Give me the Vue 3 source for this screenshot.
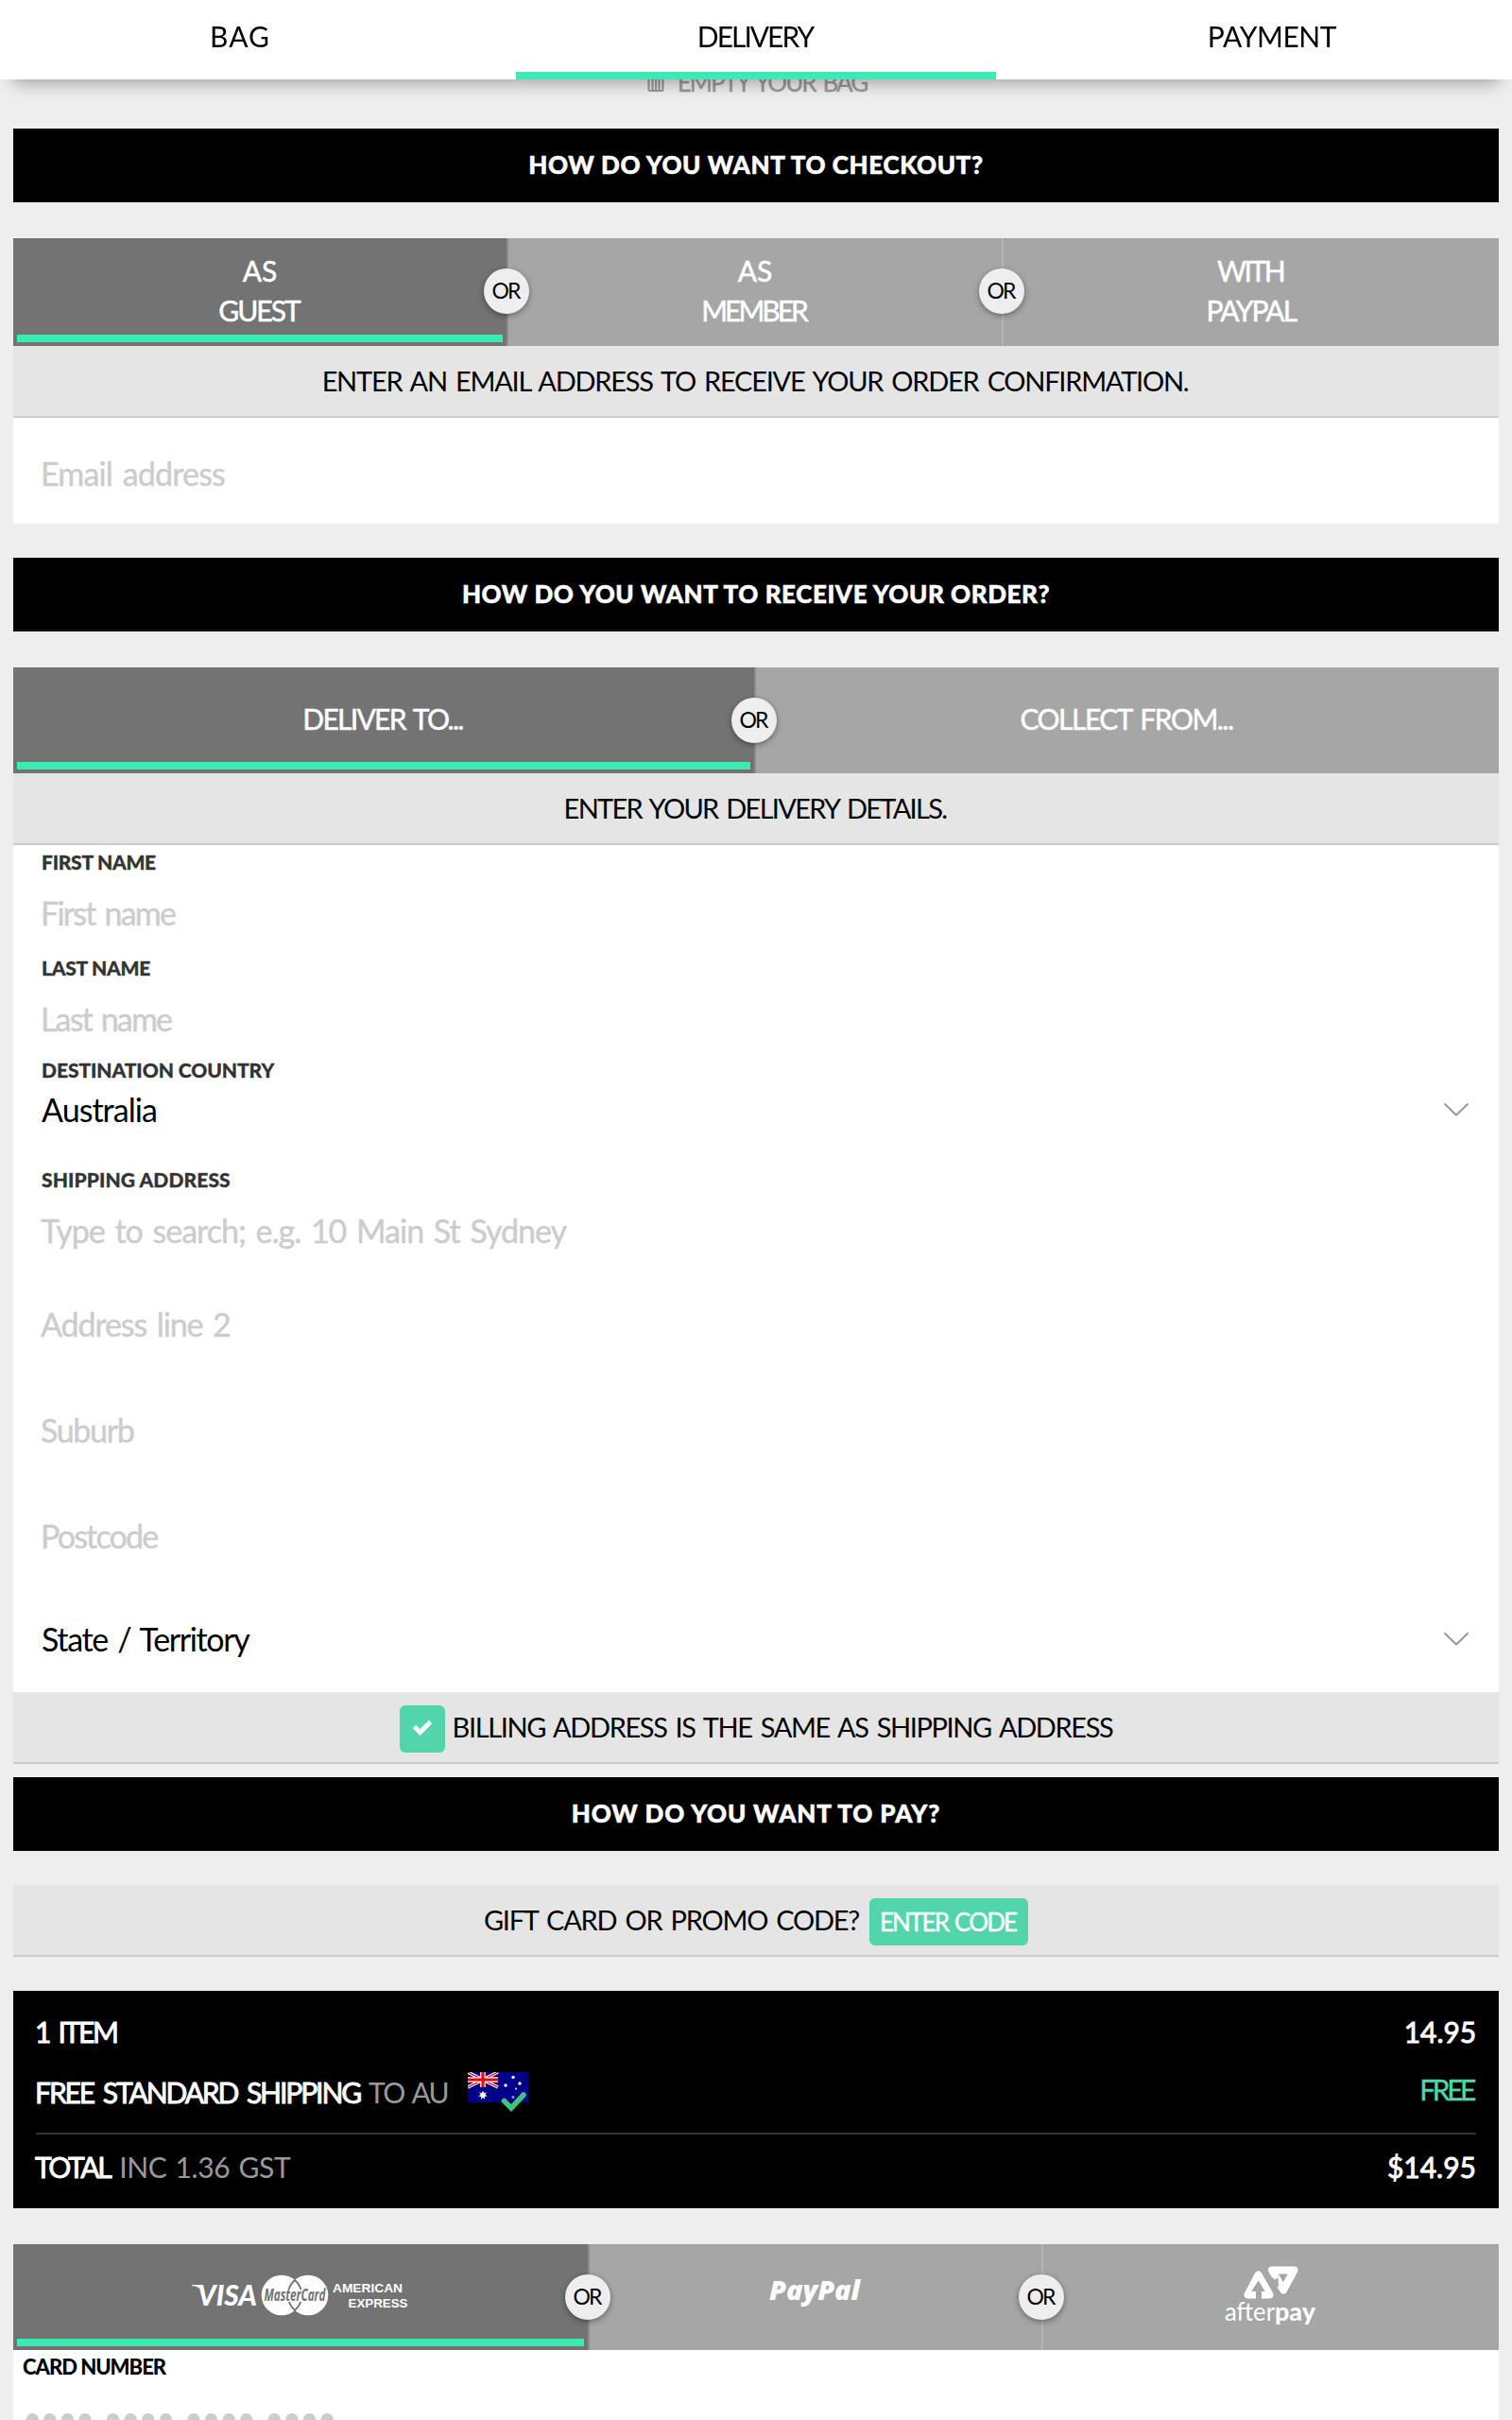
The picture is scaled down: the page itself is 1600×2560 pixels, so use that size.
<script setup>
const steps = [
  { label: 'BAG', cls: 'w-bag' },
  { label: 'DELIVERY', cls: 'w-delivery', active: true },
  { label: 'PAYMENT', cls: 'w-payment' },
]
const checkoutTabs = [
  { lines: [['AS', ''], ['GUEST', 'w-guest']], active: true },
  { lines: [['AS', ''], ['MEMBER', 'w-member']] },
  { lines: [['WITH', 'w-with'], ['PAYPAL', 'w-paypal']] },
]
const deliveryTabs = [
  { label: 'DELIVER TO...', cls: 'w-deliver', active: true },
  { label: 'COLLECT FROM...', cls: 'w-collect' },
]
const fields = [
  { label: 'FIRST NAME', lcls: 'w-lfirst', text: 'First name', cls: 'w-first' },
  { label: 'LAST NAME', lcls: 'w-llast', text: 'Last name', cls: 'w-last' },
  { label: 'DESTINATION COUNTRY', lcls: 'w-ldest', text: 'Australia', cls: 'w-aus', select: true },
  { label: 'SHIPPING ADDRESS', lcls: 'w-lship', text: 'Type to search; e.g. 10 Main St Sydney', cls: 'w-type' },
  { text: 'Address line 2', cls: 'w-line2' },
  { text: 'Suburb', cls: 'w-suburb' },
  { text: 'Postcode', cls: 'w-postcode' },
  { text: 'State / Territory', cls: 'w-state', select: true },
]
</script>

<template>
  <div class="page">
    <header class="steps">
      <div v-for="s in steps" :key="s.label" class="step" :class="{ active: s.active }">
        <span :class="s.cls">{{ s.label }}</span>
      </div>
    </header>

    <main class="content">
      <div class="empty-bag">
        <svg class="trash" width="18" height="26" viewBox="0 0 18 26">
          <path d="M0 5h18M6 4V1.500h6V4" fill="none" stroke="#999" stroke-width="2" />
          <path d="M1.500 7v16.500q0 1.500 1.500 1.500h12q1.500 0 1.500-1.500V7M5.500 8v16M9 8v16M12.500 8v16" fill="none" stroke="#999" stroke-width="2.200" />
        </svg>
        <span>EMPTY YOUR BAG</span>
      </div>

      <h2 class="heading"><span class="w-h1">HOW DO YOU WANT TO CHECKOUT?</span></h2>

      <div class="tabs three tall">
        <div v-for="(t, i) in checkoutTabs" :key="i" class="tab" :class="{ active: t.active }">
          <div v-for="l in t.lines" :key="l[0]" class="tab-line"><span :class="l[1]">{{ l[0] }}</span></div>
          <span v-if="i < 2" class="or">OR</span>
        </div>
      </div>
      <div class="bar"><span class="w-enter">ENTER AN EMAIL ADDRESS TO RECEIVE YOUR ORDER CONFIRMATION.</span></div>
      <div class="panel email">
        <div class="field plain"><div class="value"><span class="w-email">Email address</span></div></div>
      </div>

      <h2 class="heading"><span class="w-h2">HOW DO YOU WANT TO RECEIVE YOUR ORDER?</span></h2>

      <div class="tabs two single">
        <div v-for="(t, i) in deliveryTabs" :key="i" class="tab" :class="{ active: t.active }">
          <span :class="t.cls">{{ t.label }}</span>
          <span v-if="i < 1" class="or">OR</span>
        </div>
      </div>
      <div class="bar"><span class="w-details">ENTER YOUR DELIVERY DETAILS.</span></div>
      <div class="panel">
        <div v-for="f in fields" :key="f.text" class="field" :class="{ plain: !f.label, select: f.select }">
          <div v-if="f.label" class="label"><span :class="f.lcls">{{ f.label }}</span></div>
          <div class="value">
            <span :class="f.cls">{{ f.text }}</span>
            <svg v-if="f.select" width="28" height="16" viewBox="0 0 28 16">
              <path d="M2 2l12 11.500L26 2" fill="none" stroke="#999" stroke-width="2" stroke-linecap="round" />
            </svg>
          </div>
        </div>
      </div>
      <div class="bar billing">
        <span class="check">
          <svg width="22" height="18" viewBox="0 0 22 18">
            <path d="M2.500 8.500l6 6L19.500 3.500" fill="none" stroke="#fff" stroke-width="4.800" />
          </svg>
        </span>
        <span class="w-billing">BILLING ADDRESS IS THE SAME AS SHIPPING ADDRESS</span>
      </div>

      <h2 class="heading pay-heading"><span class="w-h3">HOW DO YOU WANT TO PAY?</span></h2>

      <div class="bar promo">
        <span class="w-gift">GIFT CARD OR PROMO CODE?</span>
        <button class="code"><span>ENTER CODE</span></button>
      </div>

      <section class="summary">
        <div class="row first">
          <span class="strong w-item">1 ITEM</span>
          <span class="strong w-price">14.95</span>
        </div>
        <div class="row ship">
          <div class="ship-left">
            <span class="strong w-free">FREE STANDARD SHIPPING</span>
            <span class="muted w-to">TO AU</span>
            <svg class="flag" width="64" height="44" viewBox="0 0 64 44">
              <rect width="64" height="32" fill="#00008b" />
              <g>
                <path d="M0 0l32 16M32 0L0 16" stroke="#fff" stroke-width="3.400" />
                <path d="M0 0l32 16M32 0L0 16" stroke="#f00" stroke-width="1.200" />
                <path d="M16 0v16M0 8h32" stroke="#fff" stroke-width="5.600" />
                <path d="M16 0v16M0 8h32" stroke="#f00" stroke-width="3.200" />
              </g>
              <g fill="#fff">
                <path d="M16 19.500l1.100 2.700 2.800-.9-1.500 2.500 2.400 1.600-2.900.4.200 2.900-2.100-2-2.100 2 .2-2.900-2.900-.4 2.400-1.600-1.500-2.500 2.800.9z" />
                <circle cx="48" cy="5.500" r="1.700" />
                <circle cx="40" cy="14" r="1.700" />
                <circle cx="55" cy="12" r="1.700" />
                <circle cx="51" cy="17.500" r="1" />
                <circle cx="48" cy="26.500" r="1.500" opacity=".6" />
              </g>
              <path d="M38.500 30.500l7.500 7.500L59 24" fill="none" stroke="#3dc47e" stroke-width="5.600" stroke-linecap="round" />
            </svg>
          </div>
          <span class="green w-gratis">FREE</span>
        </div>
        <div class="row total">
          <div>
            <span class="strong w-total">TOTAL</span>
            <span class="muted w-inc">INC 1.36 GST</span>
          </div>
          <span class="strong">$14.95</span>
        </div>
      </section>

      <div class="tabs pay">
        <div class="tab active">
          <svg width="230" height="46" viewBox="0 0 230 46">
            <text x="6" y="34" class="visa" textLength="63" lengthAdjust="spacingAndGlyphs">VISA</text>
            <path d="M0 12h10l2.500 5-2 1.500Q8 13.500 0 13z" fill="#fff" />
            <circle cx="95" cy="23" r="21.300" fill="#fff" />
            <circle cx="123" cy="23" r="21.300" fill="#fff" />
            <path d="M109 7a21.300 21.300 0 0 0 0 32a21.300 21.300 0 0 0 0-32z" fill="none" stroke="#737373" stroke-width="1.800" />
            <rect x="76" y="17" width="66" height="13" fill="#fff" />
            <text x="76.500" y="29" class="master" textLength="65" lengthAdjust="spacingAndGlyphs">MasterCard</text>
            <text x="149" y="20" class="amex" textLength="74" lengthAdjust="spacingAndGlyphs">AMERICAN</text>
            <text x="165.500" y="35.500" class="amex" textLength="63" lengthAdjust="spacingAndGlyphs">EXPRESS</text>
          </svg>
          <span class="or">OR</span>
        </div>
        <div class="tab">
          <svg class="pp" width="100" height="44" viewBox="0 0 100 44">
            <text x="1" y="29" class="paypal" textLength="96" lengthAdjust="spacingAndGlyphs">PayPal</text>
          </svg>
          <span class="or">OR</span>
        </div>
        <div class="tab">
          <svg width="98" height="70" viewBox="0 0 98 70">
            <path d="M35.500 11.500L24.500 32.500H47.500z" fill="#fff" stroke="#fff" stroke-width="8" stroke-linejoin="round" />
            <path d="M35.600 17.500l7.200 11.500H39v8h-6v-8h-4.700z" fill="#a6a6a6" />
            <path d="M50 6.500H73.500L62 27.500z" fill="none" stroke="#fff" stroke-width="8" stroke-linejoin="round" />
            <path d="M44.500 17.500l5-4 3.500 3 3.500-2 .5 9.500-8-.5 1.500-2.500z" fill="#a6a6a6" />
            <text x="0" y="59.500" class="after" textLength="53" lengthAdjust="spacingAndGlyphs">after</text>
            <text x="53" y="59.500" class="after bold" textLength="43" lengthAdjust="spacingAndGlyphs">pay</text>
          </svg>
        </div>
      </div>
      <div class="panel card">
        <div class="card-label">CARD NUMBER</div>
        <div class="card-dots">•••• •••• •••• ••••</div>
      </div>
    </main>
  </div>
</template>

<style>
body { background: #eee; }
</style>

<style scoped>
.page {
  width: 1600px;
  height: 2560px;
  overflow: hidden;
  background: #eee;
  color: #000;
  font-family: Lato, "Open Sans", sans-serif;
  font-size: 30px;
  white-space: nowrap;
}
.page * { box-sizing: border-box; }

.steps {
  position: fixed;
  z-index: 5;
  top: 0;
  left: 0;
  width: 1600px;
  height: 84px;
  display: flex;
  gap: 38px;
  background: #fff;
  box-shadow: 0 18px 18px -14px rgba(0, 0, 0, .32);
}
.step { flex: 1; text-align: center; line-height: 76px; }
.step.active { border-bottom: 8px solid #3ceab3; }

.content { padding: 64px 14px 0; }
.empty-bag {
  height: 72px;
  display: flex;
  justify-content: center;
  align-items: flex-start;
  gap: 14px;
  padding-left: 2px;
  line-height: 46px;
  font-size: 26px;
  letter-spacing: -1.95px;
  word-spacing: 3px;
  color: #999;
  -webkit-text-stroke: .3px #999;
}
.trash { margin-top: 7px; }

.heading {
  margin: 0;
  height: 78px;
  background: #000;
  color: #fff;
  text-align: center;
  line-height: 76px;
  font-size: 26px;
  font-weight: 900;
  -webkit-text-stroke: .5px #fff;
}

.tabs { display: grid; margin-top: 38px; color: #fff; }
.three { grid-template-columns: repeat(3, 1fr); }
.two { grid-template-columns: repeat(2, 1fr); }
.tab {
  position: relative;
  background: #a6a6a6;
  border-right: 2px solid #b5b5b5;
  text-align: center;
  -webkit-text-stroke: .5px #fff;
}
.tab:last-child { border-right: 0; }
.tab.active { background: #737373; border-right-color: #8d8d8d; }
.tab.active::after {
  content: "";
  position: absolute;
  left: 4px;
  right: 4px;
  bottom: 4px;
  height: 8px;
  background: #3ceab3;
}
.tall { height: 114px; }
.tall .tab { padding-top: 13px; line-height: 42px; }
.single { height: 112px; line-height: 109px; }
.or {
  position: absolute;
  z-index: 2;
  top: 32px;
  right: -24px;
  width: 48px;
  height: 48px;
  border-radius: 50%;
  background: #eee;
  box-shadow: 0 2px 6px rgba(0, 0, 0, .4);
  color: #000;
  font-size: 23px;
  line-height: 46px;
  letter-spacing: -2px;
  text-indent: -2px;
  -webkit-text-stroke: 0;
}

.bar {
  height: 76px;
  background: #e5e5e5;
  border-bottom: 2px solid #ccc;
  text-align: center;
  line-height: 73px;
  font-size: 29px;
  word-spacing: 3px;
}
.panel { background: #fff; }
.email { margin-bottom: 36px; }
.field { height: 112px; padding: 0 31px 0 29px; }
.label { padding-left: 1px; line-height: 36px; font-size: 21px; font-weight: 900; color: #333; -webkit-text-stroke: .3px #333; }
.value {
  display: flex;
  justify-content: space-between;
  align-items: center;
  line-height: 71px;
  font-size: 34px;
  word-spacing: 3px;
  color: #ccc;
  -webkit-text-stroke: .4px currentColor;
}
.plain .value { line-height: 118px; height: 118px; }
.select .label { line-height: 28px; }
.select .value { line-height: 55px; height: 55px; color: #000; -webkit-text-stroke: 0; padding-left: 1px; }
.select.plain .value { line-height: 111px; height: 111px; }

.billing { display: flex; justify-content: center; gap: 8px; }
.check {
  width: 48px;
  height: 50px;
  margin-top: 14px;
  border-radius: 6px;
  background: #52d5aa;
  display: flex;
  justify-content: center;
  padding: 14px 0 0 0;
}
.pay-heading { margin-top: 14px; }
.promo { margin-top: 36px; display: flex; justify-content: center; gap: 11px; }
.code {
  width: 168px;
  height: 50px;
  margin: 14px 0 0;
  padding: 0;
  border: 0;
  border-radius: 6px;
  background: #52d5aa;
  color: #fff;
  font-family: inherit;
  font-size: 26px;
  line-height: 48px;
  letter-spacing: -1.85px;
  word-spacing: 2px;
  text-indent: -2px;
  -webkit-text-stroke: .4px #fff;
}

.summary { margin-top: 36px; height: 230px; padding: 22px 24px 0; background: #000; color: #fff; }
.row { display: flex; justify-content: space-between; }
.row > :first-child { margin-left: -1px; }
.first { line-height: 43px; }
.ship { height: 87px; line-height: 85px; border-bottom: 2px solid #333; }
.ship-left { display: flex; align-items: flex-start; }
.flag { margin: 21px 0 0 21px; }
.total { line-height: 69px; }
.total > div { display: flex; }
.strong { -webkit-text-stroke: .9px #fff; }
.muted { color: #999; }
.green { color: #52d5aa; line-height: 79px; -webkit-text-stroke: .4px #52d5aa; }

.pay { height: 112px; grid-template-columns: 610px 480px 482px; }
.pay .tab { display: flex; justify-content: center; align-items: flex-start; -webkit-text-stroke: 0; }
.pay .tab:first-child { padding-top: 31px; }
.pay .tab:last-child { padding-top: 21px; }
.pay svg { overflow: visible; }
.pp { margin-top: 30px; }
.pay text { fill: #fff; font-family: Lato, sans-serif; }
.pay .visa { font-size: 30px; font-weight: 900; font-style: italic; }
.pay .master { font-family: "Open Sans", sans-serif; font-size: 17px; font-weight: 700; font-style: italic; fill: #737373; }
.pay .amex { font-family: "Liberation Sans", sans-serif; font-size: 13.5px; font-weight: 700; }
.pay .paypal { font-family: "Open Sans", sans-serif; font-size: 28px; font-weight: 800; font-style: italic; }
.pay .after { font-size: 26px; }
.pay .bold { font-weight: 900; }

.card { height: 120px; padding: 0 10px; }
.card-label { line-height: 36px; font-size: 22px; font-weight: 900; letter-spacing: -1px; }
.card-dots { line-height: 69px; font-size: 35px; letter-spacing: -1.7px; word-spacing: 3.7px; color: #ccc; }

/* per-label tracking */
.w-bag { letter-spacing: 1px; }
.w-delivery { letter-spacing: -2px; margin-left: -2px; }
.w-payment { letter-spacing: -.42px; }
.w-guest { letter-spacing: -2px; margin-left: -2px; }
.w-member { letter-spacing: -3px; margin-left: -3px; }
.w-with { letter-spacing: -2.5px; margin-left: -2px; }
.w-paypal { letter-spacing: -1.8px; }
.w-h1 { letter-spacing: .6px; }
.w-h2 { letter-spacing: .56px; }
.w-h3 { letter-spacing: .86px; }
.w-enter { letter-spacing: -1.25px; margin-left: -2px; }
.w-email { letter-spacing: -.85px; }
.w-deliver { letter-spacing: -1.7px; word-spacing: 3px; margin-left: -2px; }
.w-collect { letter-spacing: -1.5px; word-spacing: 3px; margin-left: -2px; }
.w-details { letter-spacing: -1.7px; margin-left: -2px; }
.w-lfirst { letter-spacing: -.26px; }
.w-llast { letter-spacing: -.26px; }
.w-ldest { letter-spacing: -.06px; }
.w-lship { letter-spacing: .1px; }
.w-first { letter-spacing: -1.78px; }
.w-last { letter-spacing: -1.85px; }
.w-aus { letter-spacing: -.96px; }
.w-type { letter-spacing: -1px; }
.w-line2 { letter-spacing: -1.1px; }
.w-suburb { letter-spacing: -1.35px; }
.w-postcode { letter-spacing: -1.8px; }
.w-state { letter-spacing: -1.35px; }
.w-billing { letter-spacing: -1.38px; }
.w-gift { letter-spacing: -1.24px; }
.w-item { letter-spacing: -2.3px; word-spacing: 4px; }
.w-price { letter-spacing: -.1px; }
.w-free { letter-spacing: -2.08px; word-spacing: 4px; }
.w-to { letter-spacing: -1.7px; word-spacing: 3px; margin-left: 9px; }
.w-gratis { letter-spacing: -3.4px; margin-right: 3px; }
.w-total { letter-spacing: -2.4px; }
.w-inc { letter-spacing: -.4px; word-spacing: 2px; margin-left: 10px; }
</style>
